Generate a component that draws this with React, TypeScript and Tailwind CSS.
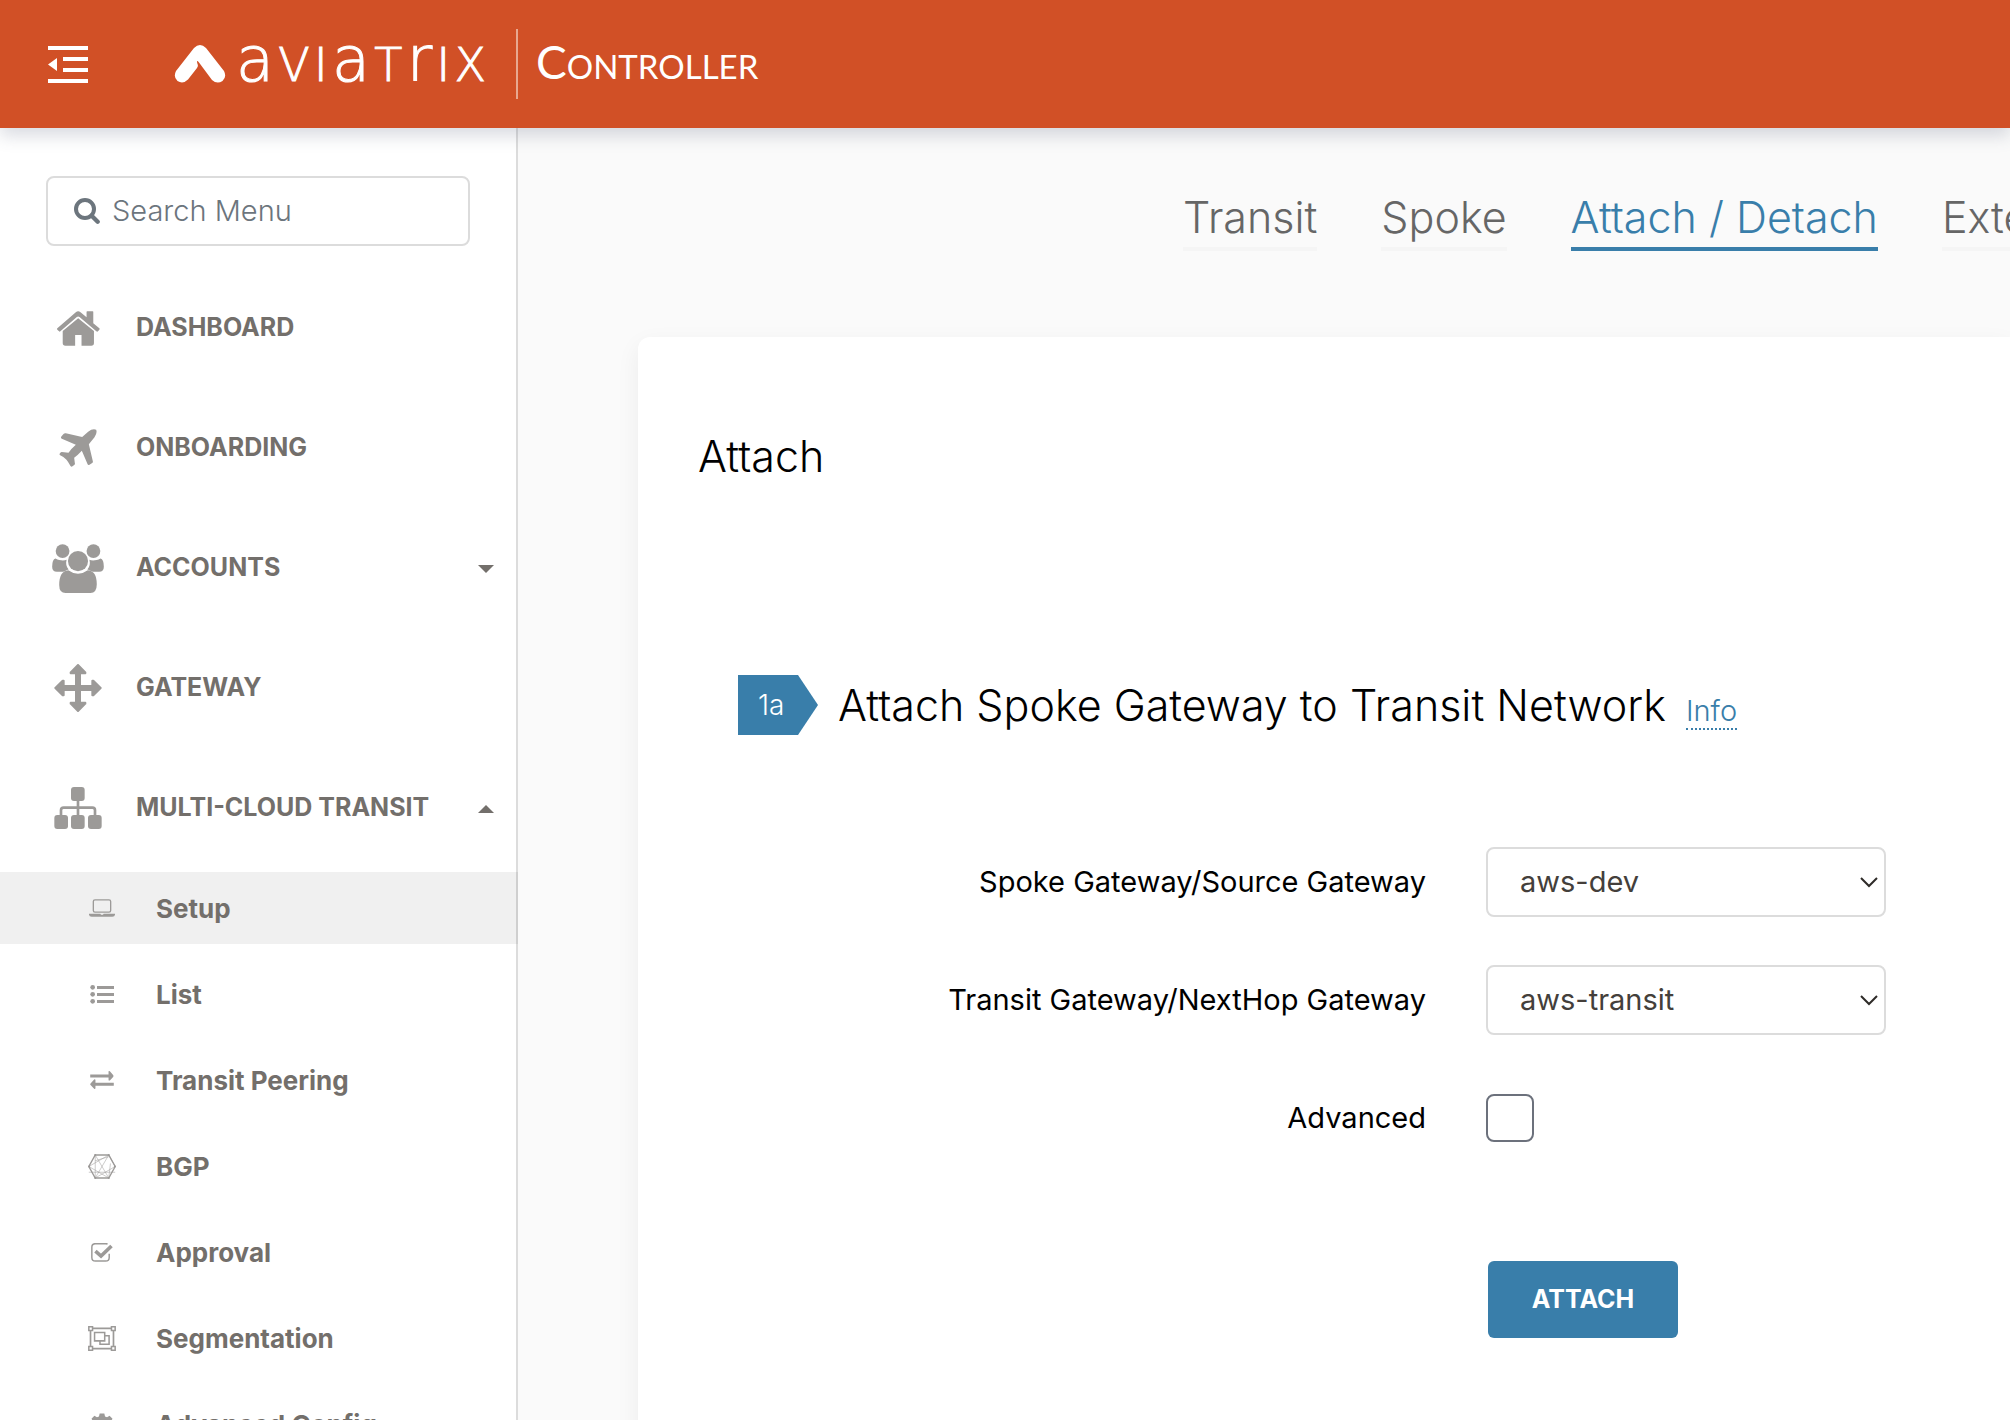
import type { ReactNode } from "react";

type IconProps = { className?: string };

function CollapseIcon() {
  return (
    <svg viewBox="0 0 40 37" className="h-[37px] w-10" fill="white" aria-hidden="true">
      <path d="M0 0h40v4H0zM15 11h25v4H15zM15 22h25v4H15zM0 33h40v4H0zM9 12v13L0 18.500z" />
    </svg>
  );
}

function LogoMark() {
  return (
    <svg viewBox="0 0 52 38" className="h-[38px] w-[52px]" fill="white" aria-hidden="true">
      <path d="M20 3Q26-3 32 3L50 26Q53 32 48.500 36Q43 39.500 38 35L25 17.500Q22 14 23.500 19Q24.500 21 23 23L14 34.500Q9 39.500 3.500 36Q-1 32 2 26Z" />
    </svg>
  );
}

function SearchIcon() {
  return (
    <svg viewBox="0 0 78 78" className="size-[26px] shrink-0" fill="none" stroke="#6c757d" aria-hidden="true">
      <circle cx="33" cy="33" r="27" strokeWidth="12" />
      <path d="M53 53L71 71" strokeWidth="13" strokeLinecap="round" />
    </svg>
  );
}

function HomeIcon() {
  return (
    <svg viewBox="0 0 128 103" className="h-[35px] w-[43px]" fill="currentColor" aria-hidden="true">
      <path d="M1 51L56 3Q63-3 70 3L88 18V2Q88 0 90 0H106Q108 0 108 2V36L126 51Q128 53 126 55L122 60Q120 62 117 60L67 17Q63 14 59 17L10 60Q8 62 6 60L1 55Q-1 53 1 51Z" />
      <path d="M63 21L110 59V95Q110 103 102 103H73V71H54V103H25Q17 103 17 95V59Z" />
    </svg>
  );
}

function PlaneIcon() {
  return (
    <svg viewBox="0 0 113 114" className="size-[38px]" fill="currentColor" aria-hidden="true">
      <path d="M111 2Q100-2 87 8L69 24L20 13Q16 12 13 15L6 23Q4 27 8 29L50 47Q36 59 28 71L8 69Q5 69 3 72Q-1 76 3 79Q16 85 22 92Q27 98 34 111Q37 115 40 112L46 107Q48 105 47 102L45 86Q56 78 68 65L85 105Q87 110 91 107L99 102Q102 100 101 97L89 46L106 25Q115 12 111 2Z" />
    </svg>
  );
}

function UsersIcon() {
  return (
    <svg viewBox="0 0 154 146" className="h-[49px] w-[52px]" fill="currentColor" aria-hidden="true">
      <circle cx="31" cy="21" r="20.500" />
      <circle cx="123" cy="21" r="20.500" />
      <circle cx="77" cy="51" r="30" />
      <path d="M10 43C22 50 36 50 43 47C40 58 42 68 49 76C42 77 38 83 32 83H14Q0 83 0 68Q0 45 10 43Z" />
      <path d="M144 43C132 50 118 50 111 47C114 58 112 68 105 76C112 77 116 83 122 83H140Q154 83 154 68Q154 45 144 43Z" />
      <path d="M48 78Q77 99 106 78Q133 80 133 120Q133 146 114 146H40Q21 146 21 122Q21 80 48 78Z" />
    </svg>
  );
}

function ArrowsIcon() {
  return (
    <svg viewBox="0 0 142 144" className="size-12" fill="currentColor" stroke="currentColor" strokeWidth="6" strokeLinejoin="round" aria-hidden="true">
      <path d="M71 3L93 25V28H77V66H114V50H117L139 72L117 94H114V78H77V116H93V119L71 141L49 119V116H65V78H28V94H25L3 72L25 50H28V66H65V28H49V25Z" />
    </svg>
  );
}

function SitemapIcon() {
  return (
    <svg viewBox="0 0 142 126" className="h-[42px] w-12" fill="currentColor" aria-hidden="true">
      <rect x="50" y="0" width="41" height="42" rx="9" />
      <rect x="0" y="84" width="41" height="42" rx="9" />
      <rect x="50" y="84" width="41" height="42" rx="9" />
      <rect x="101" y="84" width="41" height="42" rx="9" />
      <path d="M20 88V70Q20 62 28 62H114Q122 62 122 70V88M71 38V88" fill="none" stroke="currentColor" strokeWidth="8" />
    </svg>
  );
}

function LaptopIcon() {
  return (
    <svg viewBox="0 0 78 53" className="h-[18px] w-[26px]" aria-hidden="true">
      <rect x="13" y="2" width="52" height="37" rx="5" fill="none" stroke="currentColor" strokeWidth="4" />
      <path d="M0 44H34L36 47H42L44 44H78V47Q77 53 70 53H8Q1 53 0 47Z" fill="currentColor" />
    </svg>
  );
}

function ListIcon() {
  return (
    <svg viewBox="0 0 72 57" className="h-[19px] w-6" fill="currentColor" aria-hidden="true">
      <circle cx="8" cy="7" r="7" />
      <circle cx="8" cy="28" r="7" />
      <circle cx="8" cy="49" r="7" />
      <path d="M21 3h51v9H21zM21 24h51v9H21zM21 45h51v9H21z" />
    </svg>
  );
}

function ExchangeIcon() {
  return (
    <svg viewBox="0 0 72 55" className="h-[18px] w-6" fill="currentColor" aria-hidden="true">
      <path d="M0 11H56V1Q58-1 60 1L70 12Q72 15 70 18L60 29Q57 30 56 28V20H0ZM72 36H16V27Q14 24 12 26L1 38Q-1 41 1 43L12 54Q15 56 16 53V45H72Z" />
    </svg>
  );
}

function MeshIcon() {
  return (
    <svg viewBox="0 0 82 74" className="h-[25px] w-7" fill="none" stroke="currentColor" aria-hidden="true">
      <path d="M21 3H61L80 37L61 71H21L2 37Z" strokeWidth="4" />
      <path d="M21 3V71M61 3L21 71M21 3L61 71M2 37L61 3L80 37M2 37L61 71L66 28M21 71L80 37M2 54H80M21 20L61 8" strokeWidth="1.500" />
      <g fill="currentColor" stroke="none">
        <circle cx="21" cy="3" r="3" />
        <circle cx="61" cy="3" r="3" />
        <circle cx="79" cy="37" r="3" />
        <circle cx="61" cy="71" r="3" />
        <circle cx="21" cy="71" r="3" />
        <circle cx="3" cy="37" r="3" />
      </g>
    </svg>
  );
}

function CheckSquareIcon() {
  return (
    <svg viewBox="0 0 66 58" className="h-[19px] w-[22px]" fill="none" stroke="currentColor" aria-hidden="true">
      <path d="M50 3Q47 2 44 2H13Q2 2 2 13V44Q2 55 13 55H44Q55 55 55 44V33" strokeWidth="4.500" />
      <path d="M13 25L30 40L62 9" strokeWidth="11" />
    </svg>
  );
}

function ObjectGroupIcon() {
  return (
    <svg viewBox="0 0 82 74" className="h-[25px] w-7" fill="none" stroke="currentColor" aria-hidden="true">
      <path d="M13 7H69M13 67H69M7 13V61M75 13V61" strokeWidth="5" />
      <path d="M2 2h11v11H2zM69 2h11v11H69zM2 61h11v11H2zM69 61h11v11H69zM19 19h30v25H19zM49 29H62V54H35V44" strokeWidth="4.500" />
    </svg>
  );
}

function GearIcon() {
  return (
    <svg viewBox="0 0 24 24" className="size-7" fill="currentColor" aria-hidden="true">
      <path
        fillRule="evenodd"
        d="M10 3h4l.6 2.600 1.700.7L18.500 5l2.500 2.500-1.300 2.200.7 1.700 2.600.6v3l-2.600.6-.7 1.700 1.300 2.200-2.500 2.500-2.200-1.300-1.700.7L14 24h-4l-.6-2.600-1.700-.7L5.500 22 3 19.500l1.300-2.200-.7-1.700L1 15v-3l2.600-.6.7-1.700L3 7.500 5.500 5l2.200 1.300 1.700-.7zM12 10a3.500 3.500 0 100 7 3.500 3.500 0 000-7z"
      />
    </svg>
  );
}

function Chevron({ className }: IconProps) {
  return (
    <svg viewBox="0 0 18 11" className={className} fill="none" stroke="#2e2b28" strokeWidth="2" aria-hidden="true">
      <path d="M1 1l8 8 8-8" />
    </svg>
  );
}

const menu: { label: string; icon: ReactNode; caret?: "down" | "up" }[] = [
  { label: "DASHBOARD", icon: <HomeIcon /> },
  { label: "ONBOARDING", icon: <PlaneIcon /> },
  { label: "ACCOUNTS", icon: <UsersIcon />, caret: "down" },
  { label: "GATEWAY", icon: <ArrowsIcon /> },
  { label: "MULTI-CLOUD TRANSIT", icon: <SitemapIcon />, caret: "up" },
];

const submenu: { label: string; icon: ReactNode; active?: boolean }[] = [
  { label: "Setup", icon: <LaptopIcon />, active: true },
  { label: "List", icon: <ListIcon /> },
  { label: "Transit Peering", icon: <ExchangeIcon /> },
  { label: "BGP", icon: <MeshIcon /> },
  { label: "Approval", icon: <CheckSquareIcon /> },
  { label: "Segmentation", icon: <ObjectGroupIcon /> },
  { label: "Advanced Config", icon: <GearIcon /> },
];

const tabs = [
  { label: "Transit" },
  { label: "Spoke" },
  { label: "Attach / Detach", active: true },
  { label: "External Device" },
];

function Header() {
  return (
    <header className="relative z-10 flex h-32 shrink-0 items-center bg-[#d15026] pl-12 text-white shadow-[0_8px_16px_rgba(70,80,110,0.2)]">
      <button type="button" aria-label="Collapse menu" className="mr-[86px]">
        <CollapseIcon />
      </button>
      <LogoMark />
      <div className="mb-1 ml-2.5 flex w-[250px] items-baseline justify-between font-['DejaVu_Sans'] font-extralight leading-[76px] [-webkit-text-stroke:1px_white]">
        <span className="text-[62px]">a</span>
        <span className="text-[46px]">V</span>
        <span className="text-[46px]">I</span>
        <span className="text-[62px]">a</span>
        <span className="text-[46px]">T</span>
        <span className="text-[62px]">r</span>
        <span className="text-[46px]">I</span>
        <span className="text-[46px]">X</span>
      </div>
      <div className="ml-[30px] h-[70px] w-0.5 bg-[#e8a890]" />
      <div className="ml-[18px] font-[Lato] text-[33px] leading-[76px]">
        <span className="text-[46px]">C</span>ONTROLLER
      </div>
    </header>
  );
}

function Sidebar() {
  return (
    <nav aria-label="Main menu" className="w-[518px] shrink-0 border-r-2 border-[#dcdcdc] bg-white pt-12 font-bold text-[#736f6b]">
      <label className="mx-[46px] mb-[22px] flex h-[70px] items-center gap-3 rounded-lg border-2 border-[#dcdcdc] px-[26px] font-light">
        <SearchIcon />
        <input
          type="text"
          aria-label="Search Menu"
          placeholder="Search Menu"
          className="w-full min-w-0 text-[29px] outline-none placeholder:text-[#6c757d]"
        />
      </label>
      <ul>
        {menu.map((item) => (
          <li key={item.label}>
            <a href="#" className="flex h-[120px] items-center pr-[22px] text-[25px]">
              <span className="ml-11 flex w-[68px] justify-center text-[#9c9a98]">{item.icon}</span>
              <span className="ml-6">{item.label}</span>
              {item.caret && (
                <svg viewBox="0 0 16 10" className="ml-auto h-2.5 w-4" fill="currentColor" aria-hidden="true">
                  <path d={item.caret === "down" ? "M0 2h16L8 10z" : "M0 10h16L8 2z"} />
                </svg>
              )}
            </a>
          </li>
        ))}
      </ul>
      <ul className="mt-1 flex flex-col gap-3.5">
        {submenu.map((item) => (
          <li key={item.label}>
            <a
              href="#"
              className={
                item.active
                  ? "-mr-0.5 flex h-[72px] items-center border-r-2 border-[#cfcfcf] bg-[#f0f0f0] text-[26px]"
                  : "flex h-[72px] items-center text-[26px]"
              }
            >
              <span className="ml-[82px] flex w-10 justify-center text-[#9c9a98]">{item.icon}</span>
              <span className="ml-[34px]">{item.label}</span>
            </a>
          </li>
        ))}
      </ul>
    </nav>
  );
}

function SelectRow({ id, label, value }: { id: string; label: string; value: string }) {
  return (
    <div className="flex h-[70px] items-center gap-[60px]">
      <label htmlFor={id} className="w-[688px] text-right">
        {label}
      </label>
      <div className="relative">
        <select
          id={id}
          defaultValue={value}
          className="h-[70px] w-[400px] appearance-none rounded-lg border-2 border-[#dcdcdc] bg-white pl-8 text-[29px] text-[#443f3b]"
        >
          <option>{value}</option>
        </select>
        <Chevron className="pointer-events-none absolute right-2 top-[30px] h-[11px] w-[18px]" />
      </div>
    </div>
  );
}

export default function App() {
  return (
    <div className="flex h-screen flex-col overflow-hidden bg-[#fafafa] font-[Inter,sans-serif]">
      <Header />
      <div className="flex min-h-0 flex-1">
        <Sidebar />
        <main className="min-w-0 flex-1 overflow-hidden">
          <nav aria-label="Setup steps" className="flex gap-16 pl-[665px] pt-[62px]">
            {tabs.map((tab) => (
              <a
                key={tab.label}
                href="#"
                className={
                  tab.active
                    ? "whitespace-nowrap border-b-4 border-[#397eaa] pb-0.5 text-[43px] font-[350] leading-[55px] text-[#397eaa]"
                    : "whitespace-nowrap border-b-4 border-[#f5f5f5] pb-0.5 text-[43px] font-[350] leading-[55px] text-[#666]"
                }
              >
                {tab.label}
              </a>
            ))}
          </nav>
          <section className="ml-[120px] mt-[86px] min-h-full rounded-l-xl bg-white pl-[60px] pt-[88px] text-black shadow-[0_8px_24px_rgba(0,0,0,0.06)]">
            <h1 className="text-[43px] font-[350] leading-[62px]">Attach</h1>
            <div className="mt-[188px] flex h-[60px] items-center pl-10">
              <span className="flex h-[60px] w-20 items-center bg-[#397eaa] pl-5 text-[28px] font-light text-white [clip-path:polygon(0_0,75%_0,100%_50%,75%_100%,0_100%)]">
                1a
              </span>
              <h2 className="ml-5 flex items-baseline gap-5 text-[43px] font-[350] leading-[60px]">
                Attach Spoke Gateway to Transit Network
                <a href="#" className="border-b-2 border-dotted border-[#397eaa] text-[29px] leading-[34px] text-[#397eaa]">
                  Info
                </a>
              </h2>
            </div>
            <form className="mt-28 flex flex-col gap-12 pl-10 text-[29px]" onSubmit={(e) => e.preventDefault()}>
              <SelectRow id="spoke" label="Spoke Gateway/Source Gateway" value="aws-dev" />
              <SelectRow id="transit" label="Transit Gateway/NextHop Gateway" value="aws-transit" />
              <div className="flex h-[70px] items-center gap-[60px]">
                <label htmlFor="advanced" className="w-[688px] text-right">
                  Advanced
                </label>
                <input id="advanced" type="checkbox" className="size-12 appearance-none rounded-lg border-2 border-[#6c717c] bg-white" />
              </div>
              <button type="submit" className="ml-[750px] mt-[60px] h-[77px] w-[190px] rounded-md bg-[#397eaa] text-[25px] font-bold text-white">
                ATTACH
              </button>
            </form>
          </section>
        </main>
      </div>
    </div>
  );
}
